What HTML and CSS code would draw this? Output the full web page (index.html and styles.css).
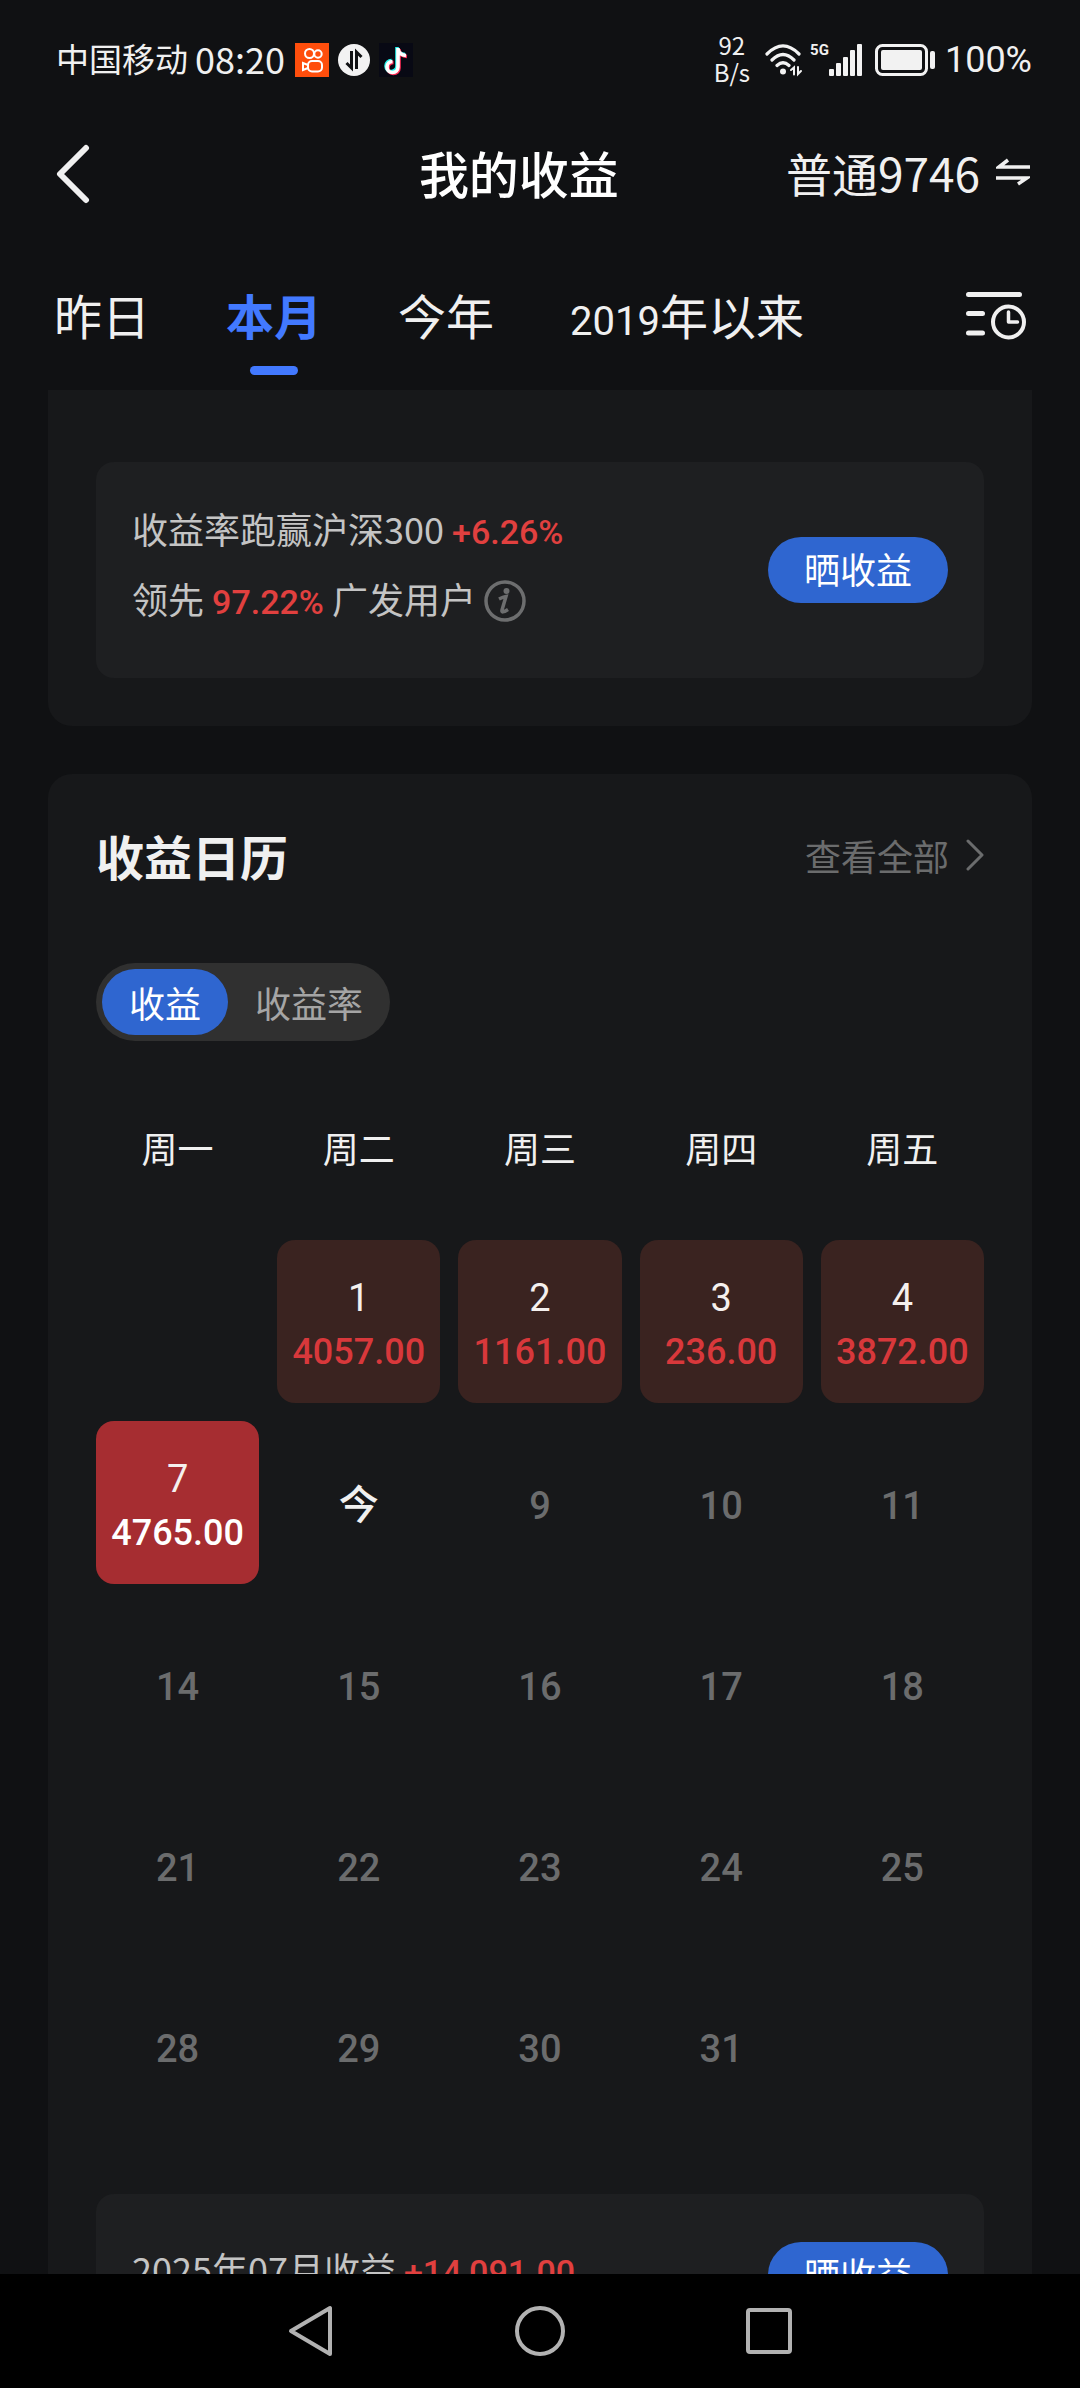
FILE: index.html
```html
<!DOCTYPE html>
<html lang="zh-CN">
    <head>
        <meta charset="UTF-8"><meta name="viewport" content="width=device-width, initial-scale=1.0"><title>我的收益</title>
        <link rel="stylesheet" href="styles.css">
    </head>
    <body>
        <div class="status-bar">
            <span class="carrier">中国移动</span>
            <span class="clock">08:20</span>
            <svg class="app-icon" width="34" height="34" viewBox="0 0 34 34" fill="none" stroke="#fff" stroke-width="2">
                <rect width="34" height="34" fill="#ff4e0c" stroke="none"/>
                <circle cx="14.500" cy="10.500" r="4.500"/><circle cx="23" cy="11" r="3.700"/>
                <rect x="13" y="18" width="14" height="10.500" rx="4"/>
                <path d="M13 22l-5-2v7l5-2"/>
            </svg>
            <svg class="app-icon" width="32" height="32" viewBox="0 0 32 32">
                <circle cx="16" cy="16" r="16" fill="#f2f2f2"/>
                <path d="M13.500 7v17l-5-5M18.500 25V8l5 5" fill="none" stroke="#101113" stroke-width="3"/>
            </svg>
            <svg class="app-icon" width="34" height="34" viewBox="0 0 34 34" fill="none" stroke-width="3.600">
                <rect width="34" height="34" fill="#080914"/>
                <path d="M18 4v19a5.500 5.500 0 1 1-5.500-5.500M18 5q1 6 8 6.500" stroke="#25f4ee"/>
                <path d="M20 6v19a5.500 5.500 0 1 1-5.500-5.500M20 7q1 6 8 6.500" stroke="#fe2c55"/>
                <path d="M19 5v19a5.500 5.500 0 1 1-5.500-5.500M19 6q1 6 8 6.500" stroke="#fff"/>
            </svg>
            <div class="net-speed"><span>92</span><span>B/s</span></div>
            <svg class="wifi" width="38" height="34" viewBox="0 0 38 34" fill="none" stroke="#f2f2f2" stroke-width="3.200" stroke-linecap="round">
                <path d="M2 11Q18 -5 34 11M7 17Q18 6 29 17M12 22.500Q18 17 24 22.500"/>
                <circle cx="18" cy="28.500" r="3" fill="#f2f2f2" stroke="none"/>
                <path d="M26 27l3-2.500v7M33 24v7l3-3" stroke-width="2"/>
            </svg>
            <span class="five-g">5G</span>
            <svg class="signal" width="34" height="32" viewBox="0 0 34 32" fill="#f2f2f2">
                <rect y="25" width="5" height="7" rx="1"/><rect x="7" y="19" width="5" height="13" rx="1"/>
                <rect x="14" y="13" width="5" height="19" rx="1"/><rect x="21" y="6" width="5" height="26" rx="1"/>
                <rect x="28" width="5" height="32" rx="1"/>
            </svg>
            <svg class="battery" width="60" height="32" viewBox="0 0 60 32">
                <rect x="1.500" y="1.500" width="50" height="29" rx="6" fill="none" stroke="#f2f2f2" stroke-width="3"/>
                <rect x="6" y="6" width="41" height="20" rx="2" fill="#f2f2f2"/>
                <rect x="55" y="7" width="5" height="18" rx="2" fill="#f2f2f2"/>
            </svg>
            <span class="battery-text">100%</span>
        </div>

        <header class="header">
            <button class="back" aria-label="返回">
                <svg width="34" height="60" viewBox="0 0 34 60" fill="none" stroke="#f0f0f0" stroke-width="6" stroke-linecap="round" stroke-linejoin="round"><path d="M30 4L4 30l26 26"/></svg>
            </button>
            <h1 class="title">我的收益</h1>
            <button class="account">普通9746
                <svg width="34" height="28" viewBox="0 0 34 28" fill="none" stroke="#f0f0f0" stroke-width="3.500"><path d="M34 9H3L12 2M0 20h31l-9 6"/></svg>
            </button>
        </header>

        <nav class="tabs">
            <button class="tab">昨日</button>
            <button class="tab active">本月</button>
            <button class="tab">今年</button>
            <button class="tab"><span class="num">2019</span>年以来</button>
            <button class="filter" aria-label="筛选时间">
                <svg width="60" height="50" viewBox="0 0 60 50" fill="none" stroke="#f0f0f0" stroke-width="5" stroke-linecap="round">
                    <path d="M2.500 3.500h51M2.500 22.500h14M2.500 42h14"/>
                    <circle cx="42.500" cy="31" r="15.500" stroke-width="4"/>
                    <path d="M42.500 21v10h9" stroke-width="3.500" stroke-linejoin="round"/>
                </svg>
            </button>
        </nav>

        <main class="content">
            <section class="card card-top">
                <div class="panel">
                    <div class="panel-text">
                        <p>收益率跑赢沪深300 <b class="red">+6.26%</b></p>
                        <p>领先 <b class="red">97.22%</b> 广发用户
                            <svg class="info" width="42" height="42" viewBox="0 0 42 42" fill="none" stroke="#6d6e6f">
                                <circle cx="21" cy="21" r="19" stroke-width="3.500"/>
                                <circle cx="22.500" cy="11" r="3" fill="#6d6e6f" stroke="none"/>
                                <path d="M15 19q4-2 7-2.500l-4 13.500q-1 4 6-.500" stroke-width="3.500"/>
                            </svg>
                        </p>
                    </div>
                    <button class="share">晒收益</button>
                </div>
            </section>

            <section class="card">
                <div class="card-head">
                    <h2>收益日历</h2>
                    <a class="more" href="#">查看全部
                        <svg width="18" height="32" viewBox="0 0 18 32" fill="none" stroke="#6b6c6d" stroke-width="3" stroke-linecap="round" stroke-linejoin="round"><path d="M2 2l14 14L2 30"/></svg>
                    </a>
                </div>
                <div class="switch">
                    <button class="on">收益</button>
                    <button>收益率</button>
                </div>
                <table class="calendar">
                    <thead>
                        <tr><th>周一</th><th>周二</th><th>周三</th><th>周四</th><th>周五</th></tr>
                    </thead>
                    <tbody>
                        <tr>
                            <td></td>
                            <td class="gain">1<b>4057.00</b></td>
                            <td class="gain">2<b>1161.00</b></td>
                            <td class="gain">3<b>236.00</b></td>
                            <td class="gain">4<b>3872.00</b></td>
                        </tr>
                        <tr><td class="gain selected">7<b>4765.00</b></td><td class="today">今</td><td>9</td><td>10</td><td>11</td></tr>
                        <tr><td>14</td><td>15</td><td>16</td><td>17</td><td>18</td></tr>
                        <tr><td>21</td><td>22</td><td>23</td><td>24</td><td>25</td></tr>
                        <tr><td>28</td><td>29</td><td>30</td><td>31</td><td></td></tr>
                    </tbody>
                </table>
                <div class="panel panel-month">
                    <div class="panel-text">
                        <p>2025年07月收益 <b class="red">+14,091.00</b></p>
                    </div>
                    <button class="share">晒收益</button>
                </div>
            </section>
        </main>

        <footer class="nav-bar">
            <button aria-label="后退"><svg width="50" height="52" viewBox="0 0 50 52" fill="none" stroke="#b2b2b2" stroke-width="4" stroke-linejoin="round"><path d="M44 3v46L5 26z"/></svg></button>
            <button aria-label="主页"><svg width="50" height="52" viewBox="0 0 50 52" fill="none" stroke="#b2b2b2" stroke-width="4"><circle cx="25" cy="26" r="23"/></svg></button>
            <button aria-label="最近任务"><svg width="50" height="52" viewBox="0 0 50 52" fill="none" stroke="#b2b2b2" stroke-width="4"><rect x="4" y="5" width="42" height="42" rx="2"/></svg></button>
        </footer>
    </body>
</html>
```
FILE: styles.css
```css
* {
    box-sizing: border-box;
}
body {
    margin: 0;
    height: 100vh;
    display: flex;
    flex-direction: column;
    background: #101113;
    color: #f0f0f0;
    font-family: "Noto Sans CJK SC", sans-serif;
    font-size: 36px;
}
button {
    padding: 0;
    border: none;
    background: none;
    color: inherit;
    font: inherit;
    cursor: pointer;
}
svg {
    display: block;
    flex-shrink: 0;
}
h1, h2, p {
    margin: 0;
}

/* phone status bar */
.status-bar {
    display: flex;
    align-items: center;
    height: 120px;
    padding: 0 48px 0 56px;
    font-size: 36px;
    flex-shrink: 0;
}
.carrier {
    font-size: 33px;
    margin-right: 7px;
    padding-bottom: 4px;
}
.clock {
    margin-right: 10px;
    padding-bottom: 4px;
}
.app-icon {
    margin-right: 9px;
}
.net-speed {
    display: flex;
    flex-direction: column;
    align-items: center;
    margin-left: auto;
    margin-right: 15px;
    padding-bottom: 4px;
    font-size: 24px;
    line-height: 27px;
}
.wifi {
    margin-right: 7px;
}
.five-g {
    align-self: flex-start;
    margin-top: 40px;
    font-family: Roboto, sans-serif;
    font-weight: bold;
    font-size: 15px;
    line-height: 20px;
}
.battery {
    margin: 0 10px 0 12px;
}
.battery-text {
    font-family: Roboto, sans-serif;
}

.header {
    display: flex;
    align-items: center;
    height: 108px;
    padding: 0 50px 0 56px;
    flex-shrink: 0;
}
.title {
    margin-left: auto;
    margin-right: 167px;
    padding-bottom: 4px;
    color: #fff;
    font-size: 50px;
    font-weight: 500;
}
.account {
    display: flex;
    align-items: center;
    gap: 16px;
    padding-bottom: 4px;
    font-size: 46px;
}

.tabs {
    display: flex;
    gap: 76px;
    height: 162px;
    padding: 0 54px;
    flex-shrink: 0;
}
.tab {
    display: flex;
    align-items: baseline;
    padding-top: 51px;
    position: relative;
    font-size: 48px;
    line-height: 70px;
}
.num {
    font-family: Roboto, sans-serif;
    font-size: 40px;
}
.tab.active {
    color: #4279ff;
    font-weight: bold;
}
.tab.active::after {
    content: "";
    position: absolute;
    left: 50%;
    bottom: 15px;
    width: 48px;
    height: 9px;
    margin-left: -24px;
    border-radius: 5px;
    background: #4279ff;
}
.filter {
    margin-left: auto;
    padding-top: 14px;
}

/* scrolling part between the tabs and the system bar */
.content {
    flex: 1;
    min-height: 0;
    padding: 0 48px;
    overflow-y: auto;
    scrollbar-width: none;
}
.card {
    margin-bottom: 48px;
    padding: 48px;
    border-radius: 24px;
    background: #17181a;
}
.card-top {
    padding-top: 72px;
    border-radius: 0 0 24px 24px;
}
.panel {
    display: flex;
    align-items: center;
    justify-content: space-between;
    padding: 32px 36px 44px;
    border-radius: 18px;
    background: #1e1f21;
}
.panel-month {
    padding-top: 36px;
}
.panel-text {
    color: #c4c4c4;
}
.panel-text p {
    height: 70px;
    line-height: 68px;
}
.red {
    color: #e1403f;
    font-family: Roboto, sans-serif;
    font-size: 34px;
    font-weight: 500;
}
.info {
    display: inline-block;
    margin-top: -6px;
    vertical-align: middle;
}
.share {
    width: 180px;
    height: 66px;
    margin-top: 12px;
    padding-bottom: 4px;
    border-radius: 33px;
    background: #2f66d0;
    color: #fff;
    line-height: 60px;
}

.card-head {
    display: flex;
    align-items: center;
    justify-content: space-between;
    height: 70px;
    padding-bottom: 5px;
}
.card-head h2 {
    font-size: 48px;
    font-weight: bold;
}
.more {
    display: flex;
    align-items: center;
    gap: 17px;
    color: #6b6c6d;
    text-decoration: none;
}
.switch {
    display: inline-flex;
    height: 78px;
    margin-top: 71px;
    padding: 6px;
    border-radius: 39px;
    background: #303030;
    vertical-align: top;
}
.switch button {
    padding: 0 21px 0 27px;
    border-radius: 33px;
    color: #a5a5a5;
}
.switch .on {
    padding: 0 27px;
    background: #2f66d0;
    color: #fff;
}

.calendar {
    width: calc(100% + 36px);
    margin: 15px -18px 49px;
    border-spacing: 18px;
    table-layout: fixed;
}
.calendar th {
    height: 148px;
    padding: 0 0 3px;
    font-weight: normal;
}
.calendar td {
    height: 163px;
    padding: 6px 0 0;
    border-radius: 18px;
    color: #6b6c6d;
    font-family: Roboto, "Noto Sans CJK SC", sans-serif;
    font-size: 38px;
    font-weight: 500;
    line-height: 54px;
    text-align: center;
}
.calendar td b {
    display: block;
    color: #d8383b;
    font-size: 36px;
    font-weight: 500;
}
.calendar .gain {
    background: #3a2320;
    color: #f5f0ee;
    font-weight: normal;
}
.calendar .selected {
    background: #a62d31;
}
.calendar .selected b {
    color: #fff;
}
.calendar .today {
    color: #f0f0f0;
    font-size: 40px;
}

.nav-bar {
    display: flex;
    align-items: center;
    justify-content: center;
    gap: 179px;
    height: 114px;
    background: #000;
    flex-shrink: 0;
}
```
